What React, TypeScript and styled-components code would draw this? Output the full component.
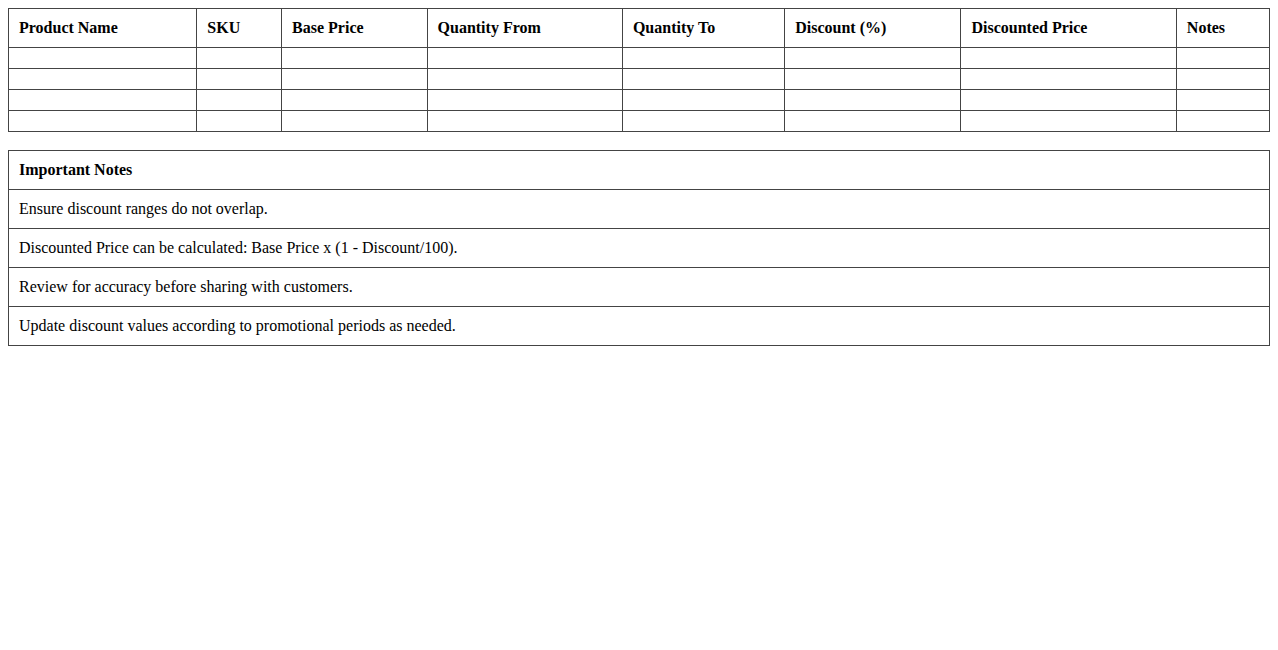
import styled, { createGlobalStyle } from 'styled-components';

const GlobalStyle = createGlobalStyle`
  body {
    margin: 8px;
    background: #ffffff;
    font-family: "Liberation Serif", "Times New Roman", serif;
    font-size: 16px;
    color: #000000;
  }
`;

const Table = styled('table')<{ $gap?: number }>`
  width: 100%;
  border-collapse: collapse;
  margin-top: ${(p) => p.$gap ?? 0}px;
`;

const HeadCell = styled('th')`
  border: 1px solid #444;
  padding: 10px;
  text-align: left;
  font-weight: bold;
`;

const Cell = styled('td')`
  border: 1px solid #444;
  padding: 10px;
  text-align: left;
`;

const columns = [
  'Product Name',
  'SKU',
  'Base Price',
  'Quantity From',
  'Quantity To',
  'Discount (%)',
  'Discounted Price',
  'Notes',
];

const notes = [
  'Ensure discount ranges do not overlap.',
  'Discounted Price can be calculated: Base Price x (1 - Discount/100).',
  'Review for accuracy before sharing with customers.',
  'Update discount values according to promotional periods as needed.',
];

export default function App() {
  return (
    <>
      <GlobalStyle />
      <Table>
        <thead>
          <tr>
            {columns.map((c) => (
              <HeadCell key={c}>{c}</HeadCell>
            ))}
          </tr>
        </thead>
        <tbody>
          {[0, 1, 2, 3].map((r) => (
            <tr key={r}>
              {columns.map((c) => (
                <Cell key={c}></Cell>
              ))}
            </tr>
          ))}
        </tbody>
      </Table>
      <Table $gap={18}>
        <thead>
          <tr>
            <HeadCell>Important Notes</HeadCell>
          </tr>
        </thead>
        <tbody>
          {notes.map((n) => (
            <tr key={n}>
              <Cell>{n}</Cell>
            </tr>
          ))}
        </tbody>
      </Table>
    </>
  );
}
